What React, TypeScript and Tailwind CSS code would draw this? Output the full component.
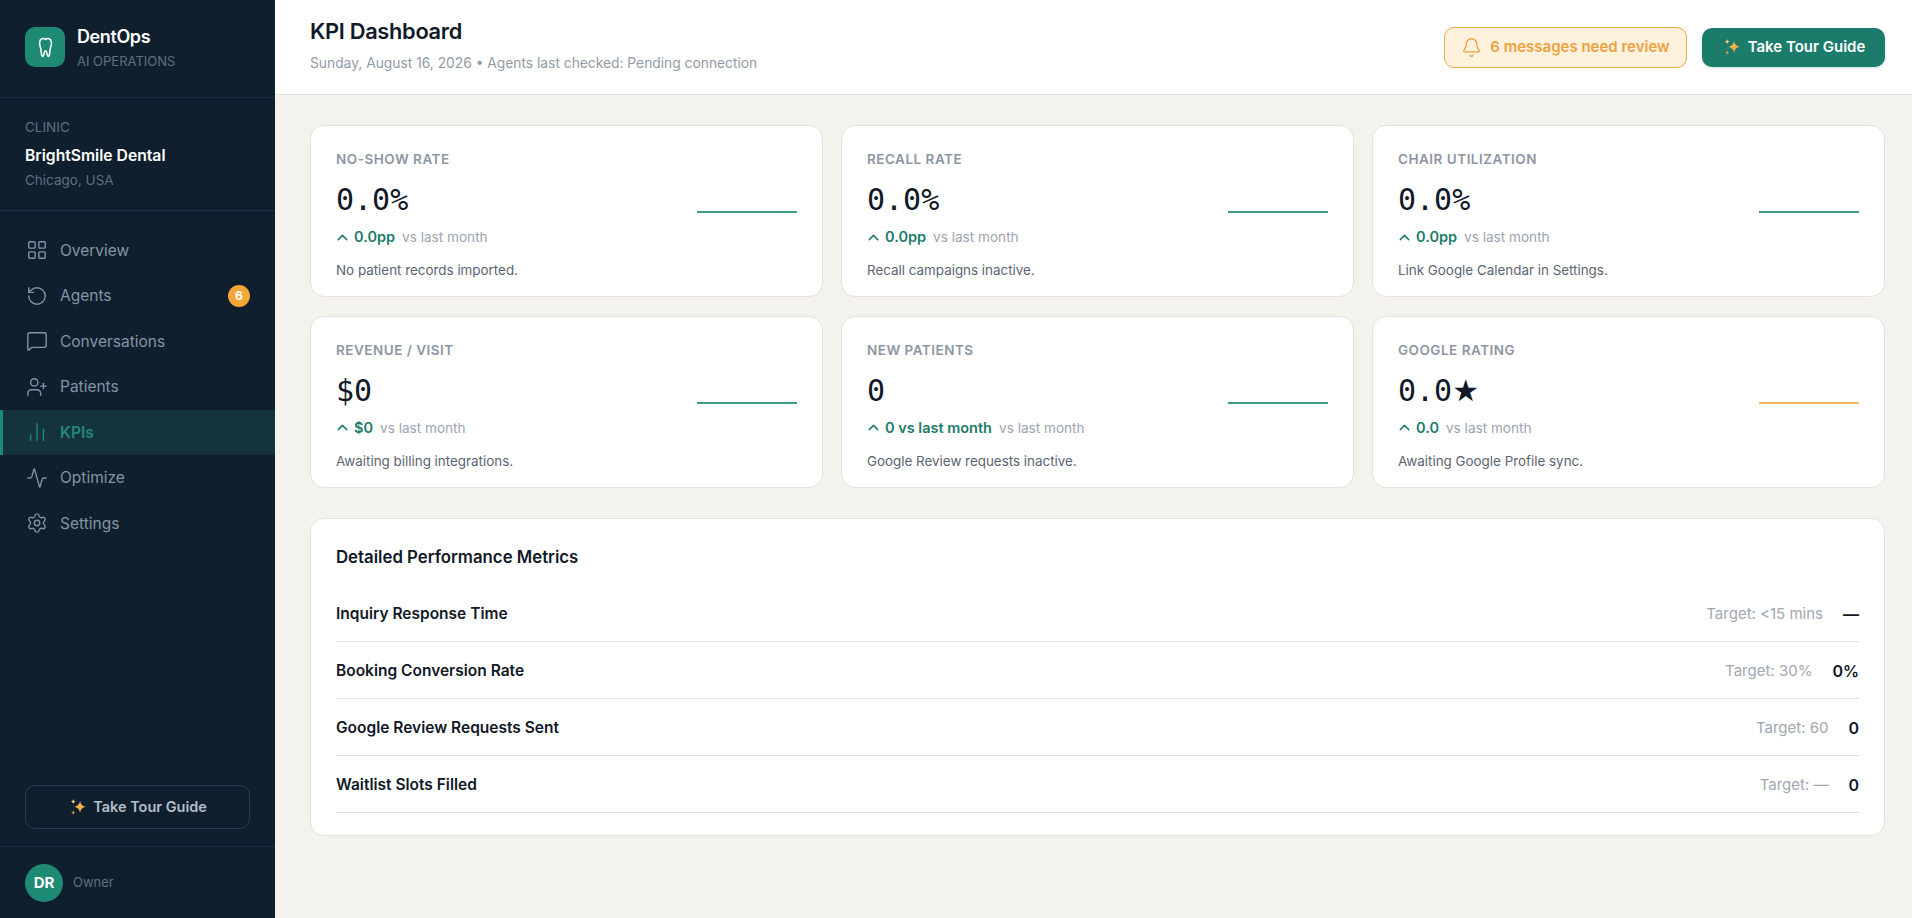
import { Activity, Bell, ChartNoAxesColumn, ChevronUp, LayoutGrid, MessageSquare, RotateCcw, Settings, UserPlus } from 'lucide-react';

const navItems = [
  { label: 'Overview', icon: LayoutGrid },
  { label: 'Agents', icon: RotateCcw, badge: '6' },
  { label: 'Conversations', icon: MessageSquare },
  { label: 'Patients', icon: UserPlus },
  { label: 'KPIs', icon: ChartNoAxesColumn, active: true },
  { label: 'Optimize', icon: Activity },
  { label: 'Settings', icon: Settings },
];

const cards = [
  { label: 'NO-SHOW RATE', value: '0.0%', delta: '0.0pp', note: 'No patient records imported.' },
  { label: 'RECALL RATE', value: '0.0%', delta: '0.0pp', note: 'Recall campaigns inactive.' },
  { label: 'CHAIR UTILIZATION', value: '0.0%', delta: '0.0pp', note: 'Link Google Calendar in Settings.' },
  { label: 'REVENUE / VISIT', value: '$0', delta: '$0', note: 'Awaiting billing integrations.' },
  { label: 'NEW PATIENTS', value: '0', delta: '0 vs last month', note: 'Google Review requests inactive.' },
  { label: 'GOOGLE RATING', value: '0.0', star: true, delta: '0.0', note: 'Awaiting Google Profile sync.', amber: true },
];

const metrics = [
  { label: 'Inquiry Response Time', target: 'Target: <15 mins', value: '—' },
  { label: 'Booking Conversion Rate', target: 'Target: 30%', value: '0%' },
  { label: 'Google Review Requests Sent', target: 'Target: 60', value: '0' },
  { label: 'Waitlist Slots Filled', target: 'Target: —', value: '0' },
];

function SparkleIcon({ className }: { className: string }) {
  return (
    <svg viewBox="0 0 20 20" className={className}>
      <path d="M11.500 3.500c.7 3.600 1.900 4.800 5.500 5.800-3.600 1-4.800 2.200-5.500 6-.8-3.800-2-5-5.500-6 3.500-1 4.700-2.200 5.500-5.800z" fill="#f2b04a" />
      <path d="M5 2c.3 1.600.8 2.100 2.300 2.500C5.800 4.900 5.300 5.400 5 7 4.700 5.400 4.200 4.900 2.700 4.500 4.200 4.100 4.700 3.600 5 2z" fill="#f7cf7e" />
      <path d="M5 12.500c.3 1.500.7 1.900 2.100 2.300-1.400.4-1.800.8-2.100 2.300-.3-1.500-.7-1.900-2.100-2.300 1.400-.4 1.800-.8 2.100-2.300z" fill="#e89a3c" />
    </svg>
  );
}

function ToothIcon() {
  return (
    <svg viewBox="0 0 24 24" fill="none" stroke="white" strokeWidth="1.600" strokeLinecap="round" strokeLinejoin="round" className="h-[23px] w-[23px]">
      <path d="M12 3.500C9.500 1.800 6 2.500 5.800 7c-.1 2.500.8 4 1.200 6 .4 2.200.5 5 1 7 .3 1.200 1.100 1.700 1.700.8.8-1.300.8-5.300 2.300-5.300s1.500 4 2.300 5.300c.6.9 1.400.4 1.700-.8.5-2 .6-4.800 1-7 .4-2 1.300-3.500 1.200-6C18 2.500 14.500 1.800 12 3.500z" />
    </svg>
  );
}

function Sidebar() {
  return (
    <aside className="flex h-[918px] w-[275px] shrink-0 flex-col bg-[#0f1f2e]">
      <div className="flex h-[98px] items-center gap-[12px] border-b border-[#1f3040] px-[25px] pb-[3px]">
        <div className="flex h-[40px] w-[40px] items-center justify-center rounded-[10px] bg-[#1f8a74]">
          <ToothIcon />
        </div>
        <div>
          <div className="text-[18px] leading-[24px] font-semibold tracking-[-0.4px] text-white">DentOps</div>
          <div className="mt-[3px] text-[13px] leading-[18px] text-[#5f6f7e]">AI OPERATIONS</div>
        </div>
      </div>

      <div className="flex h-[113px] flex-col justify-center border-b border-[#1f3040] px-[25px]">
        <div className="-mt-[1px] text-[13.500px] leading-[18px] text-[#5f6f7e]">CLINIC</div>
        <div className="mt-[9px] text-[15.700px] leading-[22px] font-semibold text-white">BrightSmile Dental</div>
        <div className="mt-[4px] text-[13.500px] leading-[18px] text-[#5f6f7e]">Chicago, USA</div>
      </div>

      <nav className="flex flex-col pt-[16.500px]">
        {navItems.map((item) => (
          <div
            key={item.label}
            className={
              item.active
                ? 'flex h-[45.500px] items-center gap-[12px] border-l-[3px] border-[#1f8a74] bg-[#14333c] pr-[25px] pl-[23px] text-[#1f8a74]'
                : 'flex h-[45.500px] items-center gap-[12px] border-l-[3px] border-transparent pr-[25px] pl-[23px] text-[#8494a3]'
            }
          >
            <item.icon className="h-[22px] w-[22px]" strokeWidth={1.500} />
            <span className={item.active ? 'flex-1 text-[15.500px] font-semibold' : 'flex-1 text-[15.500px]'}>{item.label}</span>
            {item.badge && (
              <span className="flex h-[22px] w-[22px] items-center justify-center rounded-full bg-[#f4a638] text-[12px] font-bold text-white">
                {item.badge}
              </span>
            )}
          </div>
        ))}
      </nav>

      <div className="mt-auto px-[25px] pb-[17px]">
        <button className="flex h-[44px] w-full items-center justify-center gap-[4px] rounded-[10px] border border-[#2a3b4c] text-[14.500px] font-semibold text-[#b4bfca]">
          <SparkleIcon className="h-[21px] w-[21px]" />
          Take Tour Guide
        </button>
      </div>
      <div className="flex h-[72px] items-center gap-[10px] border-t border-[#1f3040] px-[25px] pt-[1px]">
        <div className="flex h-[38px] w-[38px] items-center justify-center rounded-full bg-[#1f8a74] text-[15px] font-bold text-white">DR</div>
        <span className="text-[13px] text-[#5f6f7e]">Owner</span>
      </div>
    </aside>
  );
}

function Header() {
  return (
    <header className="flex h-[95px] items-center justify-between border-b border-[#e5e2db] bg-white pr-[27px] pl-[35px]">
      <div className="-mt-[6px]">
        <h1 className="text-[21.800px] leading-[30px] font-semibold tracking-[-0.3px] text-[#111827]">KPI Dashboard</h1>
        <p className="mt-[7px] text-[13.800px] leading-[20px] text-[#939aa7]">
          Sunday, August 16, 2026 • Agents last checked: Pending connection
        </p>
      </div>
      <div className="flex items-center gap-[15px]">
        <div className="flex h-[41px] w-[243px] items-center justify-center gap-[8px] rounded-[10px] border border-[#eba94e] bg-[#fef2dd] text-[15px] font-semibold text-[#eea13f]">
          <Bell className="h-[21px] w-[21px]" strokeWidth={1.500} />
          6 messages need review
        </div>
        <button className="flex h-[39px] w-[183px] items-center justify-center gap-[5px] rounded-[10px] bg-[#1c7c6b] text-[15px] font-semibold text-white shadow-sm shadow-[#1c7c6b]/20">
          <SparkleIcon className="h-[21px] w-[21px]" />
          Take Tour Guide
        </button>
      </div>
    </header>
  );
}

function KpiCard({ card }: { card: (typeof cards)[number] }) {
  return (
    <div className="relative h-[172px] rounded-[14px] border border-[#e5e2db] bg-white px-[25px] pt-[24px]">
      <div className="text-[13.500px] leading-[18px] font-semibold tracking-[0.5px] text-[#8e95a3]">{card.label}</div>
      <div className="mt-[13px] flex h-[38px] items-center font-['DejaVu_Sans_Mono',monospace] text-[30px] leading-[38px] text-[#111827]">
        {card.value}
        {card.star && <span className="font-['DejaVu_Sans',sans-serif]">★</span>}
      </div>
      <div className="mt-[8px] flex items-center leading-[20px]">
        <ChevronUp className="mr-[3px] -ml-[2px] h-[17px] w-[17px] text-[#1c7c6b]" strokeWidth={2} />
        <span className="text-[14.500px] font-semibold text-[#1c7c6b]">{card.delta}</span>
        <span className="ml-[7px] text-[13.600px] text-[#9ca3af]">vs last month</span>
      </div>
      <div className="mt-[14px] text-[13.400px] leading-[18px] text-[#5b6472]">{card.note}</div>
      <svg viewBox="0 0 100 2" preserveAspectRatio="none" className="absolute top-[85px] right-[25px] h-[2px] w-[100px]">
        <rect width="100" height="2" fill={card.amber ? '#f2b75f' : '#3f9c88'} />
      </svg>
    </div>
  );
}

function MetricsPanel() {
  return (
    <section className="mt-[30.500px] h-[318px] rounded-[14px] border border-[#e5e2db] bg-white px-[25px] pt-[26px]">
      <h2 className="text-[16.800px] leading-[24px] font-semibold text-[#111827]">Detailed Performance Metrics</h2>
      <div className="mt-[16px]">
        {metrics.map((metric) => (
          <div key={metric.label} className="flex h-[57px] items-center justify-between border-b border-[#e5e2db] pt-[2px]">
            <span className="text-[15.500px] font-semibold text-[#111827]">{metric.label}</span>
            <div className="flex items-center gap-[20px]">
              <span className="text-[15px] text-[#a1a7b2]">{metric.target}</span>
              <span className="text-[16px] font-semibold text-[#111827]">{metric.value}</span>
            </div>
          </div>
        ))}
      </div>
    </section>
  );
}

export default function App() {
  return (
    <div className="flex h-[918px] overflow-hidden bg-[#f4f2ed] font-['Inter',sans-serif]">
      <Sidebar />
      <main className="min-w-0 flex-1">
        <Header />
        <div className="pt-[30px] pr-[27px] pl-[35px]">
          <div className="grid grid-cols-3 gap-x-[18px] gap-y-[18.500px]">
            {cards.map((card) => (
              <KpiCard key={card.label} card={card} />
            ))}
          </div>
          <MetricsPanel />
        </div>
      </main>
    </div>
  );
}
